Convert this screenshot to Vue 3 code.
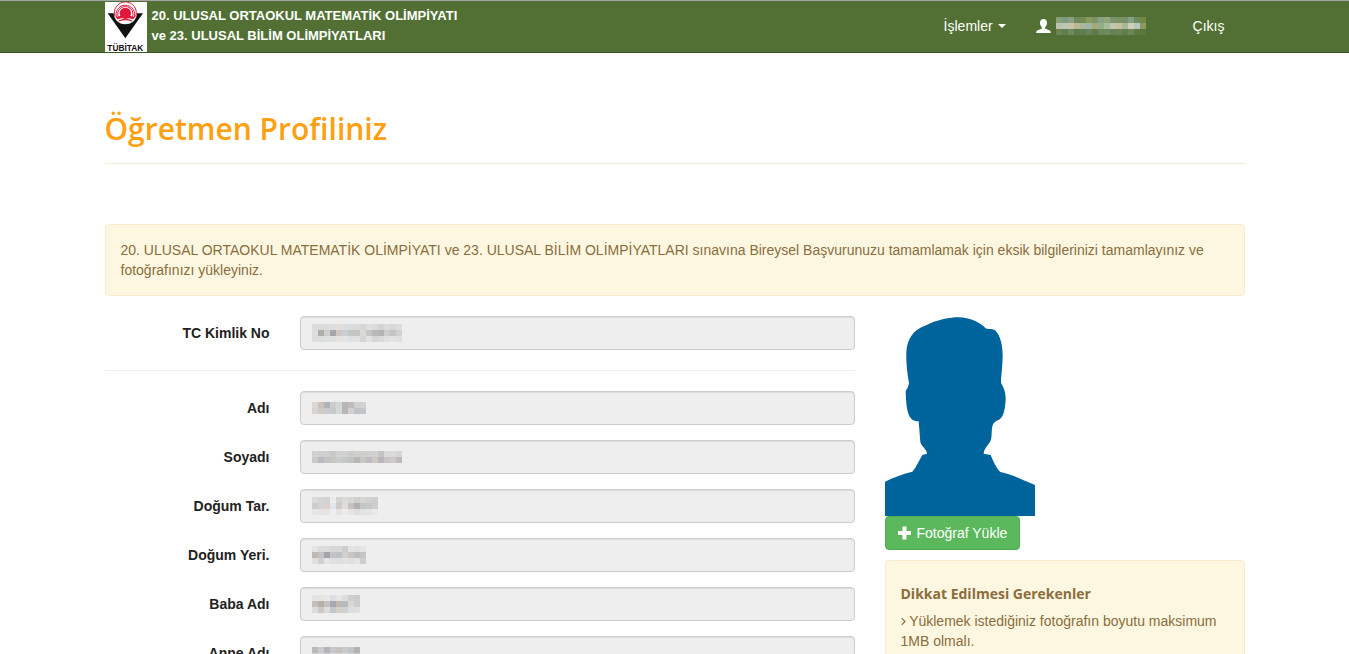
<script setup>
const userMosaic = [
  '#8a9e74 #7c9b7c #8ba083 #6c8a5a #748b50 #8a9b60 #7c9468 #8aa084 #92a57a #7c946c #7d9260 #75906a #86a082 #6e8a5c #6f8a42',
  '#b9c3ae #bcc7b4 #c5c4a6 #bcb894 #a9b89c #9eb7a8 #a9a87a #8fae8c #a9bd9c #c0c8b0 #c9bf9a #a6b89a #d0cfb6 #b4c8bd #91955f',
  '#6b8450 #5f7d4e #6c8a5c #5d7a48 #5f7f4e #66845a #607c46 #6b885a #6e8a60 #648254 #688552 #607e4c #6b8759 #5c7a40 #5b7639',
]

const fields = [
  {
    id: 'soyadi', label: 'Soyadı', offset: 'low', rows: [
      '#d2d2d2 #cfcfd0 #cfcfcf #cac9c8 #d4d2d0 #cfd1d2 #cacccd #d1d0ce #cfcdca #d0cfcd #d1d1d0 #c3c4c7 #dad8d9 #dcdad9 #d6d5d4',
      '#cdcac8 #bababc #c3c3c5 #c9c5c3 #cacbcc #c6c8ca #c2c4c4 #b9b7b2 #c8c6c7 #bcbdc0 #cec9c7 #b8b6ba #c6c4c8 #cdcac8 #bdbbbd',
    ],
  },
  {
    id: 'dogum-tarihi', label: 'Doğum Tar.', offset: 'mid', rows: [
      '#dcd9d7 #d5d5d5 #d2d3d5 #ebebeb #d5d4d3 #dadada #d7d7d4 #d0cfcf #d6d6d3 #d1d1d3 #cdced1',
      '#cfcdcb #d3d3d5 #decfca #dfe5ea #cfcac5 #dedede #c7c2bf #b4b0b1 #c4c6c6 #c9c7c3 #cdced1',
      '#e8e7e7 #e7e6e5 #e4e3e3 #eeeeee #e5e3e4 #ebebeb #e5e4e3 #dedee0 #e1e2e2 #e5e5e5 #e9e9e9',
    ],
  },
  {
    id: 'dogum-yeri', label: 'Doğum Yeri.', offset: 'mid', rows: [
      '#e4e3e0 #dadbdc #dcdcda #d7d7d7 #d7d7d8 #cececd #e4e2e2 #dde1e2 #e5e5e5',
      '#c0b8ae #c3c2c5 #a4a3a9 #c2c4c6 #bfc2c4 #d2d2d2 #c8c6c2 #bbbfc1 #c7c5c4',
      '#e0e0e0 #cfd0d2 #e5e4e4 #dfe0e1 #dfdfdf #e2e1df #dddfe0 #e4e4e4 #cfcecd',
    ],
  },
  {
    id: 'baba-adi', label: 'Baba Adı', offset: 'mid', rows: [
      '#e5e4e3 #e5e5e3 #e8e8e8 #dcdee1 #e7e7e4 #dedddd #cfcfcf #cbcdcc',
      '#c3bfb9 #b8afab #c2c2c0 #a6a7b1 #c1b9af #b5bcc0 #d8d8d8 #cccccb',
      '#dcdbda #cfc8c6 #dedddd #c6c7cc #d5cfc7 #cfd1d3 #dddddd #dfdfdf',
    ],
  },
  {
    id: 'anne-adi', label: 'Anne Adı', offset: 'low', rows: [
      '#bcb9b6 #cbcacb #b5b5b9 #c7c8ca #c6c1be #cac9c7 #c2c5c8 #b3b2b5',
      '#d6d5d3 #d4d3d3 #d1d1d3 #dcdcdc #d7d5d3 #d9d9d8 #d1d4d6 #cdcccd',
    ],
  },
]

const identity = {
  id: 'tc-kimlik', label: 'TC Kimlik No', offset: 'mid', rows: [
    '#dcdcdc #d9dada #dcdcda #dddede #e3deda #dbdedf #dadcdd #d9dadb #d7d7d4 #dddedf #dcdcda #d4d4d2 #dadbdc #d7d7d6 #dcdddc',
    '#dedede #adafaf #cfcfcd #a5a5ab #d0c7c1 #c9cfd3 #c3c6c6 #c4c6c5 #dad9d5 #c5c5c4 #b8b8b8 #b7b4b6 #cdcdcb #c1c5c5 #d2d2d1',
    '#dedede #dcdddd #e0e0df #dfe0e1 #e6e2df #e3e5e6 #dfe0e0 #e2e2e2 #d5d5d4 #e1e2e3 #d6d6d4 #dcdcdc #dfe0e1 #e4e3e0 #e0e0e0',
  ],
}

const firstName = {
  id: 'adi', label: 'Adı', offset: 'low', rows: [
    '#dad9d8 #cdc1b8 #aeb4b8 #cccdce #d5d6d6 #b9b8b8 #c2babc #d0d1d1 #d1d4d5',
    '#d5d4d2 #d0c9c4 #c8cccf #c6c9cb #d6d7d7 #b8b6b6 #d6cfd1 #c1c4c4 #c3c6c6',
  ],
}

const groups = [[identity], [firstName, ...fields]]

const cells = (rows) =>
  rows.flatMap((row, y) => row.split(' ').map((fill, x) => ({ x: x * 6, y: y * 6, fill })))
const columns = (rows) => rows[0].split(' ').length
</script>

<template>
  <div class="page">
    <header class="navbar">
      <div class="container bar">
        <a class="brand" href="#">
          <svg class="logo" viewBox="0 0 126 150" role="img" aria-label="TÜBİTAK">
            <rect width="126" height="150" fill="#fff" />
            <path d="M8 34H114L61 109Z" fill="#111" />
            <path d="M26 30H96C97 52 81 67 61 67S25 52 26 30Z" fill="#fff" />
            <g fill="none" stroke="#e2173c" stroke-width="3">
              <path d="M30 44a33 33 0 1 1 62 0" />
              <path d="M35 48a28 28 0 1 1 52 0" />
              <path d="M41 48a23 23 0 1 1 40 0" />
            </g>
            <circle cx="61" cy="34" r="17" fill="#e2173c" />
            <path d="M33 46Q61 34 89 46L85 52Q61 43 37 52Z" fill="#e2173c" />
            <path d="M41 57Q61 48 81 57" fill="none" stroke="#e2173c" stroke-width="4" />
            <text x="61" y="146" text-anchor="middle" class="logo-text">TÜBİTAK</text>
          </svg>
          <span>20. ULUSAL ORTAOKUL MATEMATİK OLİMPİYATI<br />ve 23. ULUSAL BİLİM OLİMPİYATLARI</span>
        </a>
        <nav class="menu">
          <button type="button" class="nav-item">İşlemler <span class="caret"></span></button>
          <a class="nav-item" href="#" aria-label="Kullanıcı">
            <svg class="user" viewBox="0 0 15 14" aria-hidden="true">
              <path d="M7.500 0C9.800 0 11 1.500 11 3.800C11 5.800 10.300 7.300 9.200 8.200V9.500C10.500 10.600 14.800 11 14.800 13.200V14H.2V13.200C.2 11 4.500 10.600 5.800 9.500V8.200C4.700 7.300 4 5.800 4 3.800C4 1.500 5.200 0 7.500 0Z" fill="#fff" />
            </svg>
            <svg width="90" height="18" shape-rendering="crispEdges" aria-hidden="true">
              <rect v-for="(c, i) in cells(userMosaic)" :key="i" :x="c.x" :y="c.y" width="6" height="6" :fill="c.fill" />
            </svg>
          </a>
          <a class="nav-item exit" href="#">Çıkış</a>
        </nav>
      </div>
    </header>

    <main class="container">
      <h1>Öğretmen Profiliniz</h1>
      <p class="notice">
        20. ULUSAL ORTAOKUL MATEMATİK OLİMPİYATI ve 23. ULUSAL BİLİM OLİMPİYATLARI sınavına Bireysel Başvurunuzu tamamlamak için eksik bilgilerinizi tamamlayınız ve fotoğrafınızı yükleyiniz.
      </p>

      <div class="columns">
        <form class="details" @submit.prevent>
          <div v-for="(group, g) in groups" :key="g" class="group">
            <div v-for="f in group" :key="f.id" class="row">
              <label :for="f.id">{{ f.label }}</label>
              <div class="control">
                <input :id="f.id" type="text" disabled />
                <svg
                  class="mosaic" :class="f.offset"
                  :width="columns(f.rows) * 6" :height="f.rows.length * 6"
                  shape-rendering="crispEdges" aria-hidden="true"
                >
                  <rect v-for="(c, i) in cells(f.rows)" :key="i" :x="c.x" :y="c.y" width="6" height="6" :fill="c.fill" />
                </svg>
              </div>
            </div>
          </div>
        </form>

        <aside class="photo">
          <svg class="avatar" viewBox="45 33 450 600" role="img" aria-label="Fotoğraf">
            <path
              fill="#00649c"
              d="M45 530C70 517 95 508 127 500C140 485 148 465 157 450L171 446C170 432 155 425 151 411L146 349C115 350 109 320 107 259Q115 248 117 235C113 210 108 180 109 140C112 100 130 75 165 62C205 43 240 37 265 37C300 38 330 52 347 70C355 74 365 70 375 76C393 93 398 125 398 155C397 190 393 215 393 233C400 247 408 260 407 285C405 320 398 338 387 344C372 350 368 356 366 370C364 390 366 398 361 409C352 424 343 430 341 446L362 450C368 465 380 492 391 501C420 507 450 520 495 540V633H45Z"
            />
          </svg>
          <button type="button" class="upload">
            <svg class="plus" viewBox="0 0 14 14" aria-hidden="true">
              <path d="M4.500 .5H8.500V5H13V9H8.500V13.500H4.500V9H0V5H4.500Z" fill="#fff" />
            </svg>
            Fotoğraf Yükle
          </button>
          <section class="notice tips">
            <h2>Dikkat Edilmesi Gerekenler</h2>
            <p>
              <svg class="angle" viewBox="0 0 5 9" aria-hidden="true">
                <path d="M.7 1.200L4 4.500L.7 7.800" fill="none" stroke="#8a6d3b" stroke-width="1.200" />
              </svg>
              Yüklemek istediğiniz fotoğrafın boyutu maksimum 1MB olmalı.
            </p>
          </section>
        </aside>
      </div>
    </main>
  </div>
</template>

<style>
body {
  margin: 0;
  background: #fff;
}
</style>

<style scoped>
.page {
  font: 14px/20px "Liberation Sans", Arial, sans-serif;
  color: #222;
}
.page * {
  box-sizing: border-box;
}
.container {
  max-width: 1170px;
  margin: 0 auto;
  padding: 0 15px;
}
.navbar {
  background: #527034;
  border-top: 1px solid #a5a5a5;
  border-bottom: 1px solid #3c5421;
}
.bar {
  display: flex;
  justify-content: space-between;
}
.brand {
  display: flex;
  gap: 5px;
  color: #fff;
  font-size: 13px;
  font-weight: bold;
  text-decoration: none;
}
.brand span {
  padding-top: 5px;
}
.logo {
  width: 42px;
  height: 50px;
  margin-top: 1px;
}
.logo-text {
  font: bold 25px "Liberation Sans Narrow", "Liberation Sans", Arial, sans-serif;
  fill: #111;
}
.menu {
  display: flex;
  align-items: center;
  padding: 0 5px 2px 0;
}
.nav-item {
  display: flex;
  align-items: center;
  gap: 5px;
  padding: 0 15px;
  border: 0;
  background: none;
  color: #fff;
  font: inherit;
  text-decoration: none;
}
.exit {
  margin-left: 17px;
}
.caret {
  border: 4px solid transparent;
  border-top-color: #fff;
  border-bottom: 0;
}
.user {
  width: 15px;
  height: 14px;
}
h1 {
  margin: 56px 0 60px;
  padding-bottom: 15px;
  border-bottom: 1px solid #f5ead6;
  color: #ffa011;
  font: 600 30px/39px "Open Sans", sans-serif;
}
.notice {
  margin: 0 0 20px;
  padding: 15px;
  border: 1px solid #faebcc;
  border-radius: 4px;
  background: #fdf7e2;
  color: #8a6d3b;
}
.columns {
  display: grid;
  grid-template-columns: 2fr 1fr;
  margin: 0 -15px;
}
.details,
.photo {
  padding: 0 15px;
}
.group + .group {
  margin-top: 20px;
  padding-top: 20px;
  border-top: 1px solid #eee;
}
.row {
  display: grid;
  grid-template-columns: 1fr 3fr;
  margin: 0 -15px;
}
.row + .row {
  margin-top: 15px;
}
.row label {
  padding: 7px 15px 0;
  font-weight: bold;
  text-align: right;
}
.control {
  position: relative;
  padding: 0 15px;
}
.control input {
  display: block;
  width: 100%;
  height: 34px;
  padding: 6px 12px;
  border: 1px solid #ccc;
  border-radius: 4px;
  background: #eee;
  box-shadow: inset 0 1px 1px rgba(0, 0, 0, 0.075);
  font: inherit;
}
.mosaic {
  position: absolute;
  left: 27px;
}
.mid {
  top: 8px;
}
.low {
  top: 11px;
}
.avatar {
  display: block;
  width: 150px;
  height: 200px;
}
.upload {
  display: flex;
  align-items: center;
  gap: 5px;
  height: 34px;
  padding: 0 12px;
  border: 1px solid #4cae4c;
  border-radius: 4px;
  background: #5cb85c;
  color: #fff;
  font: inherit;
}
.plus {
  width: 14px;
  height: 14px;
}
.tips {
  margin-top: 10px;
}
.tips h2 {
  margin: 10px 0;
  font: bold 14px/15px "Open Sans", sans-serif;
}
.tips p {
  margin: 0;
}
.angle {
  width: 5px;
  height: 9px;
}
</style>
